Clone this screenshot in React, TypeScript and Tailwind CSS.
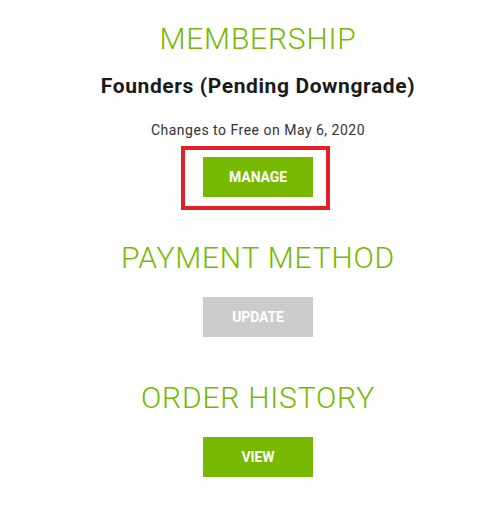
import React from "react";

const font = { fontFamily: "Roboto, 'Noto Sans', sans-serif" };

function Btn({ label, gray }: { label: string; gray?: boolean }) {
  return (
    <button
      className={
        "w-[110px] h-[40px] flex items-center justify-center text-white text-[14px] font-bold tracking-[-0.1px] " +
        (gray ? "bg-[#cccccc]" : "bg-[#76b900]")
      }
    >
      {label}
    </button>
  );
}

export default function App() {
  return (
    <div className="w-[484px] h-[507px] bg-white pl-[32px]" style={font}>
      <div className="flex flex-col items-center">
        <h2 className="mt-[21px] text-[30px] leading-[36px] font-light text-[#76b900] tracking-[0.8px]">
          MEMBERSHIP
        </h2>
        <div className="mt-[15px] text-[21px] leading-[28px] font-bold text-[#1a1a1a] tracking-[0.6px]">
          Founders (Pending Downgrade)
        </div>
        <div className="mt-[20px] text-[14px] leading-[20px] text-[#333333] tracking-[0.5px]">
          Changes to Free on May 6, 2020
        </div>
        <div className="relative mt-[17px]">
          <Btn label="MANAGE" />
          <div className="absolute left-[-22px] top-[-11px] w-[149px] h-[64px] border-4 border-[#e3202a]" />
        </div>
        <h2 className="mt-[43px] text-[30px] leading-[36px] font-light text-[#76b900] tracking-[0.8px]">
          PAYMENT METHOD
        </h2>
        <div className="mt-[21px]">
          <Btn label="UPDATE" gray />
        </div>
        <h2 className="mt-[43px] text-[30px] leading-[36px] font-light text-[#76b900] tracking-[0.8px]">
          ORDER HISTORY
        </h2>
        <div className="mt-[21px]">
          <Btn label="VIEW" />
        </div>
      </div>
    </div>
  );
}
